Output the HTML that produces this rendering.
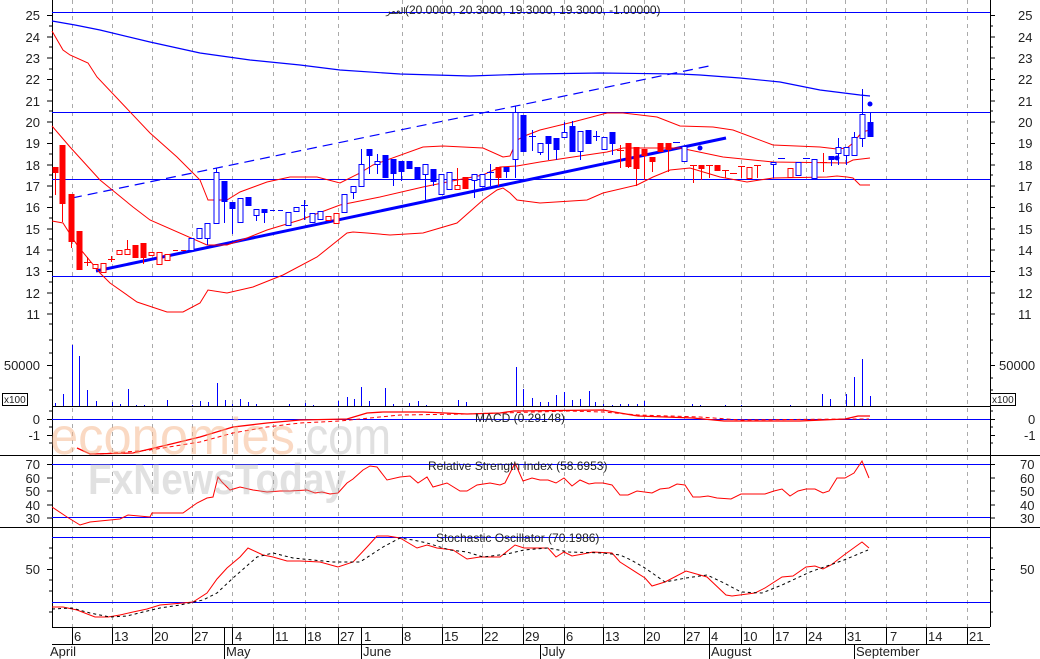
<!DOCTYPE html>
<html><head><meta charset="utf-8"><style>
html,body{margin:0;padding:0;background:#fff;width:1040px;height:659px;overflow:hidden}
svg{display:block;font-family:"Liberation Sans","DejaVu Sans",sans-serif}
.t{font-size:13px;fill:#222}
.g{stroke:#aaa;stroke-dasharray:4,4;stroke-width:1}
.rf{fill:#f00;stroke:#f00}.rh{fill:#fff;stroke:#f00}.bf{fill:#00f;stroke:#00f}.bh{fill:#fff;stroke:#00f}
.rw{stroke:#f00}.bw{stroke:#00f}
</style></head><body>
<svg width="1040" height="659" viewBox="0 0 1040 659" xmlns="http://www.w3.org/2000/svg" shape-rendering="crispEdges">
<g class="g">
<path d="M72.5 0V627M112.5 0V627M152.5 0V627M192.5 0V627M232.5 0V627M273.5 0V627M305.5 0V627M338.5 0V627M402.5 0V627M442.5 0V627M482.5 0V627M523.5 0V627M564.5 0V627M603.5 0V627M644.5 0V627M684.5 0V627M741.5 0V627M773.5 0V627M806.5 0V627M845.5 0V627M886.5 0V627M926.5 0V627M967.5 0V627"/>
</g>
<g stroke="#000" fill="none">
<path d="M52.5 0V627M990.5 0V627M52 406.5H990M52 455.5H990M0 455.5H52M990 455.5H1040M52 527.5H990M0 527.5H52M990 527.5H1040M52 627.5H990M52 644.5H990"/>
<path d="M47 15.5h5M47 37h5M47 58h5M47 79.5h5M47 101h5M47 122h5M47 143.5h5M47 165h5M47 186h5M47 207.5h5M47 229h5M47 250h5M47 271.5h5M47 293h5M47 314h5M49 26h3M49 47h3M49 69h3M49 90h3M49 111h3M49 133h3M49 154h3M49 175h3M49 197h3M49 218h3M49 239h3M49 261h3M49 282h3M49 303h3M49 324h3"/>
<path d="M990 15.5h5M990 37h5M990 58h5M990 79.5h5M990 101h5M990 122h5M990 143.5h5M990 165h5M990 186h5M990 207.5h5M990 229h5M990 250h5M990 271.5h5M990 293h5M990 314h5M990 26h3M990 47h3M990 69h3M990 90h3M990 111h3M990 133h3M990 154h3M990 175h3M990 197h3M990 218h3M990 239h3M990 261h3M990 282h3M990 303h3M990 324h3"/>
<path d="M47 365.5h5M49 340h3M49 353h3M49 378h3M49 390h3M990 365.5h5M990 340h3M990 353h3M990 378h3M990 390h3"/>
<path d="M47 419.5h5M47 435.5h5M49 411h3M49 427h3M49 443h3M990 419.5h5M990 435.5h5M990 411h3M990 427h3M990 443h3"/>
<path d="M47 464.5h5M47 478h5M47 491h5M47 505h5M47 518h5M990 464.5h5M990 478h5M990 491h5M990 505h5M990 518h5"/>
<path d="M47 569.5h5M49 548h3M49 558h3M49 580h3M49 591h3M49 612h3M990 569.5h5M990 548h3M990 558h3M990 580h3M990 591h3M990 612h3"/>
<path d="M72.5 627V644M112.5 627V644M152.5 627V644M192.5 627V644M232.5 627V644M273.5 627V644M305.5 627V644M338.5 627V644M402.5 627V644M442.5 627V644M482.5 627V644M523.5 627V644M564.5 627V644M603.5 627V644M644.5 627V644M684.5 627V644M741.5 627V644M773.5 627V644M806.5 627V644M845.5 627V644M886.5 627V644M926.5 627V644M967.5 627V644"/>
<path d="M224.5 627V659M361.5 627V659M540.5 644V659M709.5 627V659M854.5 644V659"/>
<rect x="2.5" y="393.5" width="25" height="12"/><rect x="990.5" y="393.5" width="25" height="12"/>
</g>
<g class="t" text-anchor="end">
<text x="40" y="20">25</text><text x="40" y="42">24</text><text x="40" y="63">23</text><text x="40" y="84">22</text><text x="40" y="106">21</text><text x="40" y="127">20</text><text x="40" y="148">19</text><text x="40" y="170">18</text><text x="40" y="191">17</text><text x="40" y="212">16</text><text x="40" y="234">15</text><text x="40" y="255">14</text><text x="40" y="276">13</text><text x="40" y="298">12</text><text x="40" y="319">11</text>
<text x="40" y="370">50000</text><text x="40" y="424">0</text><text x="40" y="440">-1</text>
<text x="40" y="469">70</text><text x="40" y="483">60</text><text x="40" y="496">50</text><text x="40" y="510">40</text><text x="40" y="523">30</text><text x="40" y="574">50</text>
</g>
<g class="t">
<text x="1018" y="20">25</text><text x="1018" y="42">24</text><text x="1018" y="63">23</text><text x="1018" y="84">22</text><text x="1018" y="106">21</text><text x="1018" y="127">20</text><text x="1018" y="148">19</text><text x="1018" y="170">18</text><text x="1018" y="191">17</text><text x="1018" y="212">16</text><text x="1018" y="234">15</text><text x="1018" y="255">14</text><text x="1018" y="276">13</text><text x="1018" y="298">12</text><text x="1018" y="319">11</text>
<text x="999" y="370">50000</text><text x="1028" y="424">0</text><text x="1024" y="440">-1</text>
<text x="1020" y="469">70</text><text x="1020" y="483">60</text><text x="1020" y="496">50</text><text x="1020" y="510">40</text><text x="1020" y="523">30</text><text x="1020" y="574">50</text>
<text x="4" y="403" font-size="10">x100</text><text x="992" y="403" font-size="10">x100</text>
<text x="74" y="641">6</text><text x="114" y="641">13</text><text x="154" y="641">20</text><text x="194" y="641">27</text><text x="235" y="641">4</text><text x="275" y="641">11</text><text x="307" y="641">18</text><text x="340" y="641">27</text><text x="364" y="641">1</text><text x="404" y="641">8</text><text x="444" y="641">15</text><text x="484" y="641">22</text><text x="525" y="641">29</text><text x="566" y="641">6</text><text x="605" y="641">13</text><text x="646" y="641">20</text><text x="686" y="641">27</text><text x="711" y="641">4</text><text x="743" y="641">10</text><text x="775" y="641">17</text><text x="808" y="641">24</text><text x="847" y="641">31</text><text x="890" y="641">7</text><text x="928" y="641">14</text><text x="969" y="641">21</text>
<text x="50" y="656">April</text><text x="226" y="656">May</text><text x="363" y="656">June</text><text x="542" y="656">July</text><text x="711" y="656">August</text><text x="856" y="656">September</text>
</g>
<g stroke="#00f" fill="none">
<path d="M52 12.5H990M52 112.5H990M52 179.5H990M52 276.5H990M52 419.5H990M52 464.5H990M52 517.5H990M52 537.5H990M52 602.5H990"/>
</g>
<text x="386" y="14" font-size="9" fill="#222">العمر</text>
<text x="405" y="14" font-size="12" fill="#222">(20.0000, 20.3000, 19.3000, 19.3000, -1.00000)</text>
<g fill="none" shape-rendering="auto">
<polyline stroke="#00f" stroke-width="1.2" points="52,21 75,25 100,30 150,42 200,53 250,60 300,65 340,70 400,74 470,76 530,74 600,73 680,74 700,75 740,78 780,82 820,90 860,95 870,96"/>
<line x1="72" y1="198" x2="709" y2="66" stroke="#00f" stroke-width="1.2" stroke-dasharray="10,6"/>
<line x1="96" y1="271" x2="726" y2="138" stroke="#00f" stroke-width="3"/>
<polyline stroke="#f00" points="52,31 63,50 70,55 88,63 97,77 150,133 177,157 200,180 208,200 227,200 240,192 267,182 290,177 317,177 340,183 360,173 373,165 423,147 443,146 483,148 503,157 510,156 517,140 527,135 540,130 573,122 607,113 623,113 657,117 680,126 713,127 733,130 773,145 820,147 837,149 847,148 853,143 862,132 870,130"/>
<polyline stroke="#f00" points="52,126 70,147 100,180 133,207 150,220 207,245 227,245 247,238 267,230 300,220 340,205 380,197 423,187 457,180 483,175 500,167 517,166 540,162 573,157 607,152 623,148 680,148 723,157 773,162 847,163 853,160 870,158"/>
<polyline stroke="#f00" points="52,221 63,223 77,245 100,273 110,283 137,302 167,312 183,312 200,303 208,290 227,293 253,287 283,275 317,257 347,233 353,232 367,233 390,235 423,233 457,223 483,200 497,190 503,188 510,193 517,200 540,203 587,200 603,193 637,185 653,177 670,170 690,168 720,177 747,182 773,178 827,177 837,176 847,177 853,178 860,185 870,185"/>
</g>
<g stroke-width="1">
<path class="rw" d="M55.5 167V195M62.5 145V222M71.5 194V248M87.5 257V266M84 262.5H91M111.5 256V262M108 259.5H115M127.5 240V254M143.5 243V264M173 250.5H178M181 250.5H186M620.5 145V168M617 150.5H624M628.5 143V168M636.5 147V186M644.5 149V180M652.5 157V172M668.5 143V172M693.5 165V183M690 165.5H697M701.5 165V180M709.5 165V178M706 165.5H713M725.5 170V178M722 170.5H729M730 173.5H737M741.5 166V178M738 166.5H745M757.5 165V178M754 165.5H761M823.5 153V172M820 162.5H827"/>
<path class="bw" d="M207.5 223V245M216.5 168V223M224.5 181V223M232.5 202V234M256.5 209V221M264.5 209V223M270 210.5H275M278 210.5H283M304.5 200V220M301 205.5H308M353.5 186V199M361.5 149V186M369.5 149V174M377.5 154V174M393.5 159V186M401.5 161V181M425.5 164V202M433.5 169V186M474.5 174V198M490.5 164V186M487 172.5H494M506.5 167V178M515.5 106V178M532.5 130V151M529 136.5H536M540.5 143V155M548.5 136V160M556.5 138V160M564.5 122V137M572.5 121V151M580.5 131V160M596.5 131V141M593 136.5H600M612.5 132V155M673 142.5H680M773.5 162V178M778 158.5H785M803 158.5H810M831.5 156V166M838.5 138V165M846.5 147V165M854.5 132V155M862.5 89V147M870.5 113V136"/>
<path class="rw" d="M498.5 167V186M457.5 168V189"/>
<rect class="rf" x="53" y="167.5" width="5" height="5"/>
<rect class="rf" x="60" y="145.5" width="5" height="58"/>
<rect class="rf" x="69" y="194.5" width="5" height="47"/>
<rect class="rf" x="77" y="231.5" width="5" height="38"/>
<rect class="rh" x="93" y="264.5" width="5" height="4"/>
<rect class="rh" x="101" y="263.5" width="5" height="9"/>
<rect class="rh" x="117" y="250.5" width="5" height="4"/>
<rect class="rh" x="125" y="249.5" width="5" height="5"/>
<rect class="rf" x="133" y="245.5" width="5" height="12"/>
<rect class="rf" x="141" y="243.5" width="5" height="14"/>
<rect class="rh" x="149" y="252.5" width="5" height="3"/>
<rect class="rh" x="157" y="252.5" width="5" height="12"/>
<rect class="rh" x="165" y="254.5" width="5" height="6"/>
<rect class="bh" x="189" y="238.5" width="5" height="12"/>
<rect class="bh" x="197" y="228.5" width="5" height="10"/>
<rect class="bh" x="205" y="223.5" width="5" height="15"/>
<rect class="bh" x="214" y="172.5" width="5" height="51"/>
<rect class="bf" x="222" y="181.5" width="5" height="20"/>
<rect class="bf" x="230" y="202.5" width="5" height="6"/>
<rect class="bh" x="238" y="198.5" width="5" height="24"/>
<rect class="bf" x="246" y="197.5" width="5" height="8"/>
<rect class="bh" x="254" y="209.5" width="5" height="6"/>
<rect class="bf" x="262" y="209.5" width="5" height="3"/>
<rect class="bh" x="286" y="212.5" width="5" height="13"/>
<rect class="bh" x="294" y="207.5" width="5" height="4"/>
<rect class="bh" x="310" y="213.5" width="5" height="9"/>
<rect class="bh" x="318" y="211.5" width="5" height="8"/>
<rect class="rh" x="326" y="216.5" width="5" height="4"/>
<rect class="rh" x="334" y="213.5" width="5" height="10"/>
<rect class="bh" x="342" y="194.5" width="5" height="18"/>
<rect class="bh" x="351" y="186.5" width="5" height="6"/>
<rect class="bh" x="359" y="164.5" width="5" height="22"/>
<rect class="bf" x="367" y="149.5" width="5" height="6"/>
<rect class="bh" x="375" y="161.5" width="5" height="3"/>
<rect class="bf" x="383" y="155.5" width="5" height="22"/>
<rect class="bf" x="391" y="159.5" width="5" height="14"/>
<rect class="bf" x="399" y="161.5" width="5" height="10"/>
<rect class="bf" x="407" y="161.5" width="5" height="7"/>
<rect class="bf" x="415" y="167.5" width="5" height="12"/>
<rect class="bh" x="423" y="164.5" width="5" height="10"/>
<rect class="bf" x="431" y="169.5" width="5" height="12"/>
<rect class="bh" x="439" y="174.5" width="5" height="20"/>
<rect class="bh" x="447" y="172.5" width="5" height="17"/>
<rect class="rh" x="455" y="185.5" width="5" height="4"/>
<rect class="rf" x="463" y="177.5" width="5" height="11"/>
<rect class="bh" x="472" y="174.5" width="5" height="6"/>
<rect class="bh" x="480" y="174.5" width="5" height="12"/>
<rect class="rf" x="496" y="167.5" width="5" height="10"/>
<rect class="bf" x="504" y="167.5" width="5" height="4"/>
<rect class="bh" x="513" y="112.5" width="5" height="47"/>
<rect class="bf" x="521" y="115.5" width="5" height="36"/>
<rect class="bh" x="538" y="143.5" width="5" height="9"/>
<rect class="bf" x="546" y="136.5" width="5" height="7"/>
<rect class="bf" x="554" y="138.5" width="5" height="11"/>
<rect class="bh" x="562" y="132.5" width="5" height="5"/>
<rect class="bf" x="570" y="126.5" width="5" height="25"/>
<rect class="bh" x="578" y="131.5" width="5" height="20"/>
<rect class="bf" x="586" y="130.5" width="5" height="13"/>
<rect class="bh" x="602" y="137.5" width="5" height="12"/>
<rect class="bf" x="610" y="132.5" width="5" height="11"/>
<rect class="rf" x="626" y="143.5" width="5" height="23"/>
<rect class="rf" x="634" y="147.5" width="5" height="21"/>
<rect class="rf" x="642" y="149.5" width="5" height="6"/>
<rect class="rf" x="650" y="157.5" width="5" height="4"/>
<rect class="rf" x="658" y="143.5" width="5" height="8"/>
<rect class="rf" x="666" y="143.5" width="5" height="6"/>
<rect class="bh" x="682" y="146.5" width="5" height="15"/>
<rect class="rf" x="699" y="165.5" width="5" height="3"/>
<rect class="rf" x="715" y="165.5" width="5" height="5"/>
<rect class="rh" x="747" y="167.5" width="5" height="11"/>
<rect class="bh" x="771" y="162.5" width="5" height="2"/>
<rect class="rh" x="788" y="168.5" width="5" height="9"/>
<rect class="bh" x="796" y="162.5" width="5" height="13"/>
<rect class="bh" x="812" y="159.5" width="5" height="19"/>
<rect class="bf" x="829" y="156.5" width="5" height="3"/>
<rect class="bh" x="836" y="147.5" width="5" height="6"/>
<rect class="bh" x="844" y="147.5" width="5" height="8"/>
<rect class="bh" x="852" y="137.5" width="5" height="18"/>
<rect class="bh" x="860" y="114.5" width="5" height="24"/>
<rect class="bf" x="868" y="122.5" width="5" height="14"/>
<g fill="#00f" shape-rendering="auto"><circle cx="700" cy="148" r="2.5"/><circle cx="837" cy="158" r="2.5"/><circle cx="870" cy="104" r="2.5"/></g>
</g>
<path stroke="#00f" fill="none" d="M55.5 403V406M63.5 394V406M72.5 345V406M79.5 356V406M87.5 390V406M96.5 401V406M112.5 402V406M120.5 404V406M128.5 389V406M136.5 405V406M144.5 405V406M167.5 400V406M192.5 405V406M200.5 401V406M208.5 402V406M217.5 383V406M225.5 400V406M232.5 404V406M240.5 399V406M248.5 402V406M256.5 404V406M289.5 404V406M305.5 403V406M313.5 405V406M338.5 401V406M347.5 397V406M354.5 399V406M361.5 387V406M369.5 401V406M385.5 388V406M393.5 404V406M409.5 403V406M418.5 401V406M426.5 405V406M458.5 400V406M466.5 402V406M516.5 367V406M523.5 389V406M532.5 398V406M540.5 402V406M548.5 402V406M556.5 395V406M564.5 392V406M572.5 400V406M580.5 399V406M589.5 391V406M595.5 402V406M603.5 404V406M612.5 405V406M620.5 404V406M628.5 404V406M637.5 404V406M644.5 401V406M692.5 404V406M700.5 405V406M725.5 405V406M741.5 405V406M790.5 405V406M822.5 394V406M830.5 399V406M846.5 394V406M854.5 377V406M862.5 359V406M870.5 396V406"/>
<g fill="none" stroke="#f00" shape-rendering="auto">
<polyline points="77,448 90,454 133,453 167,445 200,437 233,427 267,423 300,420 347,419 367,413 383,412 423,412 467,414 500,413 514,411 603,410 620,413 638,416 693,418 724,421 800,421 845,419 858,416 870,416" stroke-width="1.3"/>
<polyline points="100,454 150,450 200,442 233,433 267,427 300,423 340,421 400,415 467,414 500,413 569,411 603,412 638,415 700,417 741,420 845,419 869,419" stroke-dasharray="4,3"/>
<polyline points="52,507 67,517 80,525 90,522 110,520 120,519 128,515 150,517 152,513 183,513 197,503 207,498 213,497 218,477 222,482 230,490 240,487 253,490 267,492 280,491 290,491 307,490 315,493 322,492 330,494 338,493 347,483 353,479 363,470 370,466 377,467 387,480 400,477 410,476 418,483 427,477 433,487 447,483 460,491 467,491 477,485 490,483 500,485 505,483 515,463 523,481 532,478 540,480 548,480 556,483 564,478 572,486 580,480 589,484 595,483 603,483 612,485 620,495 628,495 637,491 652,493 660,489 669,488 677,484 685,485 693,497 700,497 708,496 717,498 731,499 741,494 765,494 774,491 782,489 790,496 798,491 806,489 815,489 823,493 829,491 837,478 845,478 854,473 862,461 869,478"/>
<polyline points="52,607 63,607 77,610 95,617 108,617 120,615 133,612 147,609 160,605 183,603 193,602 207,593 217,579 227,568 240,557 248,548 263,555 273,557 287,561 300,561 320,562 338,567 353,562 367,547 377,536 388,536 400,538 417,548 427,545 437,548 453,550 467,559 480,557 500,557 515,545 524,548 548,548 556,557 564,552 572,556 583,554 593,552 612,553 620,562 645,578 652,586 665,582 686,571 707,577 726,595 732,596 755,593 765,588 782,577 793,576 806,567 815,566 823,569 831,565 844,555 855,547 862,542 869,548"/>
<polyline stroke="#000" stroke-dasharray="3,3" points="52,609 72,608 90,613 110,617 127,616 143,612 160,608 180,605 203,600 217,593 233,578 257,557 273,553 293,558 333,562 360,562 383,547 400,538 413,540 427,543 450,550 467,552 483,557 507,554 524,550 548,548 569,552 603,553 620,555 631,560 645,568 665,582 686,578 707,575 724,583 741,592 762,593 782,585 810,572 844,560 868,550"/>
</g>
<g font-size="12" fill="#222">
<text x="475" y="422">MACD (0.29148)</text>
<text x="428" y="470">Relative Strength Index (58.6953)</text>
<text x="436" y="542">Stochastic Oscillator (70.1986)</text>
</g>
<g font-family="'Liberation Sans',sans-serif" shape-rendering="auto">
<text x="50" y="454" font-size="52" fill="#f6b488" fill-opacity="0.5" textLength="245" lengthAdjust="spacingAndGlyphs">economies</text>
<text x="293" y="454" font-size="52" fill="#bbb" fill-opacity="0.45" textLength="98" lengthAdjust="spacingAndGlyphs">.com</text>
<text x="88" y="494" font-size="44" font-weight="bold" fill="#aaa" fill-opacity="0.35" textLength="258" lengthAdjust="spacingAndGlyphs">FxNewsToday</text>
</g>
</svg>
</body></html>
